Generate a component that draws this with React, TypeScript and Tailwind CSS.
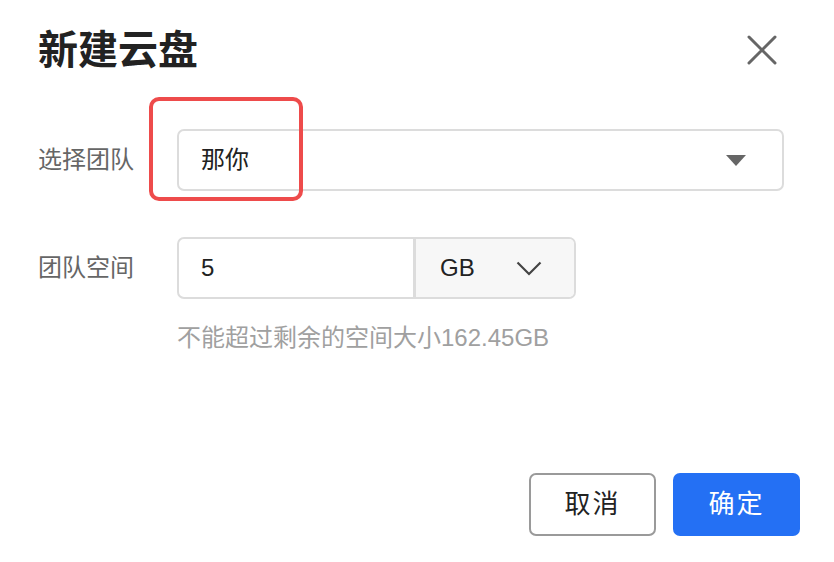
import React from 'react';

const font = { fontFamily: '"Liberation Sans", "Noto Sans CJK SC", sans-serif' };

export default function App() {
  return (
    <div className="w-[834px] h-[562px] bg-white flex flex-col" style={font}>
      {/* Header */}
      <div className="flex items-center justify-between pl-[38px] pr-[56px] pt-[26px] h-[74px]">
        <h1 className="text-[40px] leading-[46px] font-semibold text-[#222]">新建云盘</h1>
        <button className="w-[32px] h-[32px] flex items-center justify-center">
          <svg width="32" height="32" viewBox="0 0 32 32" fill="none">
            <path d="M3 3L29 29M29 3L3 29" stroke="#666" strokeWidth="3" strokeLinecap="round" />
          </svg>
        </button>
      </div>

      {/* Body */}
      <div className="flex flex-col pl-[38px] pr-[50px] mt-[55px]">
        <div className="flex items-center">
          <label className="w-[139px] text-[24px] text-[#666]">选择团队</label>
          <div className="relative flex-1">
            <div className="h-[62px] border-2 border-[#dcdcdc] rounded-[7px] flex items-center justify-between pl-[22px] pr-[36px]">
              <span className="text-[24px] text-[#222]">那你</span>
              <svg width="20" height="11" viewBox="0 0 20 11">
                <path d="M0 0H20L10 11Z" fill="#666" />
              </svg>
            </div>
            {/* highlight */}
            <div className="absolute left-[-28px] top-[-32px] w-[154px] h-[104px] border-4 border-[#ee4b4b] rounded-[10px] pointer-events-none" />
          </div>
        </div>

        <div className="flex items-start mt-[46px]">
          <label className="w-[139px] text-[24px] text-[#666] leading-[62px]">团队空间</label>
          <div className="flex flex-col">
            <div className="flex h-[62px] w-[399px] border-2 border-[#dcdcdc] rounded-[7px] overflow-hidden">
              <div className="w-[237px] flex items-center pl-[22px] text-[24px] text-[#222] border-r-[3px] border-[#dcdcdc]">5</div>
              <div className="flex-1 bg-[#f7f7f7] flex items-center pl-[24px] pr-[32px] justify-between">
                <span className="text-[24px] text-[#222]">GB</span>
                <svg width="26" height="15" viewBox="0 0 26 15" fill="none">
                  <path d="M1.5 1.5L13 13L24.5 1.5" stroke="#444" strokeWidth="2.2" />
                </svg>
              </div>
            </div>
            <p className="mt-[22px] text-[24px] text-[#a0a0a0] leading-[34px]">不能超过剩余的空间大小162.45GB</p>
          </div>
        </div>
      </div>

      {/* Footer */}
      <div className="mt-auto flex justify-end gap-[17px] pr-[34px] pb-[26px]">
        <button className="w-[127px] h-[63px] border-2 border-[#9a9a9a] rounded-[7px] text-[26px] text-[#222] bg-white tracking-[2px]">取消</button>
        <button className="w-[127px] h-[63px] rounded-[7px] text-[26px] text-white bg-[#2470f4] tracking-[2px]">确定</button>
      </div>
    </div>
  );
}
